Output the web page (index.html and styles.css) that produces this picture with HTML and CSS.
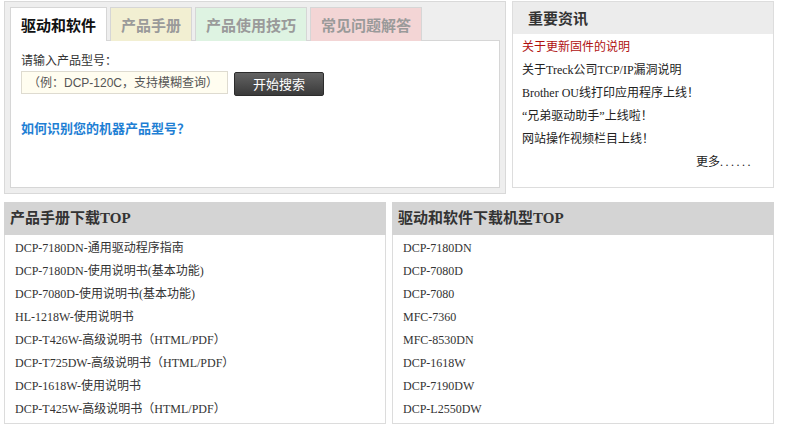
FILE: index.html
```html
<!DOCTYPE html>
<html lang="zh-CN">
<head>
<meta charset="utf-8">
<title>Brother 支持</title>
<link rel="stylesheet" href="styles.css">
</head>
<body>
<div class="page">
  <div class="top-row">
    <div class="search-box">
      <div class="tabs">
        <div class="tab tab-active">驱动和软件</div>
        <div class="tab tab-manual">产品手册</div>
        <div class="tab tab-tips">产品使用技巧</div>
        <div class="tab tab-faq">常见问题解答</div>
      </div>
      <div class="tab-content">
        <div class="label">请输入产品型号：</div>
        <div class="search-row">
          <input class="search-input" type="text" placeholder="（例：DCP-120C，支持模糊查询）">
          <button class="search-btn" type="button">开始搜索</button>
        </div>
        <a class="help-link" href="#">如何识别您的机器产品型号？</a>
      </div>
    </div>
    <div class="news-box">
      <div class="news-head">重要资讯</div>
      <ul class="news-list">
        <li class="news-hot">关于更新固件的说明</li>
        <li>关于Treck公司TCP/IP漏洞说明</li>
        <li>Brother OU线打印应用程序上线！</li>
        <li>“兄弟驱动助手”上线啦！</li>
        <li>网站操作视频栏目上线！</li>
        <li class="news-more">更多<span class="dots">......</span></li>
      </ul>
    </div>
  </div>
  <div class="bottom-row">
    <div class="panel">
      <div class="panel-head">产品手册下载TOP</div>
      <ul class="panel-list">
        <li>DCP-7180DN-通用驱动程序指南</li>
        <li>DCP-7180DN-使用说明书(基本功能)</li>
        <li>DCP-7080D-使用说明书(基本功能)</li>
        <li>HL-1218W-使用说明书</li>
        <li>DCP-T426W-高级说明书（HTML/PDF）</li>
        <li>DCP-T725DW-高级说明书（HTML/PDF）</li>
        <li>DCP-1618W-使用说明书</li>
        <li>DCP-T425W-高级说明书（HTML/PDF）</li>
      </ul>
    </div>
    <div class="panel">
      <div class="panel-head">驱动和软件下载机型TOP</div>
      <ul class="panel-list">
        <li>DCP-7180DN</li>
        <li>DCP-7080D</li>
        <li>DCP-7080</li>
        <li>MFC-7360</li>
        <li>MFC-8530DN</li>
        <li>DCP-1618W</li>
        <li>DCP-7190DW</li>
        <li>DCP-L2550DW</li>
      </ul>
    </div>
  </div>
</div>
</body>
</html>
```

FILE: styles.css
```css
* { box-sizing: border-box; }

html, body {
  margin: 0;
  padding: 0;
  background: #fff;
}

body {
  font-family: "Liberation Serif", "Noto Sans CJK SC", serif;
  font-size: 12px;
  color: #333;
}

ul { list-style: none; margin: 0; padding: 0; }

.page {
  padding: 1px 0 0 4px;
  width: 788px;
}

.top-row {
  display: flex;
  gap: 6px;
  align-items: flex-start;
}

.search-box {
  width: 502px;
  height: 193px;
  background: #eeeeee;
  border: 1px solid #d9d9d9;
  padding: 5px;
  display: flex;
  flex-direction: column;
}

.tabs {
  display: flex;
  gap: 3px;
  height: 33px;
  position: relative;
  z-index: 1;
}

.tab {
  height: 34px;
  padding: 0 10px;
  border: 1px solid #d6d6d6;
  border-bottom: none;
  font-family: "Noto Sans CJK SC", sans-serif;
  font-weight: bold;
  font-size: 15px;
  line-height: 33px;
  color: #9a9a9a;
}

.tab-active {
  background: #fff;
  color: #111;
}

.tab-manual { background: #f2efd2; }
.tab-tips { background: #def3e2; }
.tab-faq { background: #f3d5d5; }

.tab-content {
  flex: 1;
  background: #fff;
  border: 1px solid #d6d6d6;
  padding: 11px 10px 0 10px;
}

.label {
  font-family: "Noto Sans CJK SC", sans-serif;
  font-size: 12px;
  line-height: 16px;
  color: #333;
}

.search-row {
  display: flex;
  gap: 6px;
  margin-top: 3px;
  align-items: flex-start;
}

.search-input {
  width: 207px;
  height: 23px;
  margin: 0;
  padding: 0 0 0 6px;
  border: 1px solid #dedbd0;
  background: #fffdf0;
  font-family: "Liberation Sans", "Noto Sans CJK SC", sans-serif;
  font-size: 12px;
  color: #555;
  outline: none;
}

.search-input::placeholder {
  color: #555;
  opacity: 1;
}

.search-btn {
  width: 90px;
  height: 24px;
  margin: 1px 0 0 0;
  padding: 0;
  border: 1px solid #2c2c2c;
  border-radius: 2px;
  background: linear-gradient(#636363, #3a3a3a);
  color: #fff;
  font-family: "Noto Sans CJK SC", sans-serif;
  font-size: 13px;
  line-height: 22px;
}

.help-link {
  display: block;
  margin-top: 23px;
  font-family: "Noto Sans CJK SC", sans-serif;
  font-size: 13px;
  font-weight: bold;
  line-height: 18px;
  color: #1f7fd4;
  text-decoration: none;
}

.news-box {
  width: 262px;
  height: 187px;
  border: 1px solid #dddddd;
  background: #fff;
}

.news-head {
  height: 32px;
  background: #ececec;
  padding-left: 15px;
  font-family: "Noto Sans CJK SC", sans-serif;
  font-weight: bold;
  font-size: 15px;
  line-height: 32px;
  color: #333;
}

.news-list {
  padding: 2px 0 0 9px;
}

.news-list li {
  line-height: 23px;
  color: #222;
  white-space: nowrap;
}

.news-list .news-hot { color: #b01010; }

.news-list .news-more {
  text-align: right;
  padding-right: 20px;
}

.dots {
  letter-spacing: 2.5px;
}

.bottom-row {
  display: flex;
  gap: 6px;
  margin-top: 8px;
}

.panel {
  width: 382px;
  height: 222px;
  border: 1px solid #dcdcdc;
  border-top: none;
  background: #fff;
}

.panel-head {
  height: 33px;
  margin: 0 -1px;
  background: #d4d4d4;
  padding-left: 6px;
  font-family: "Liberation Serif", "Noto Sans CJK SC", serif;
  font-weight: bold;
  font-size: 15px;
  line-height: 33px;
  color: #333;
}

.panel-list {
  padding: 2px 0 0 10px;
}

.panel-list li {
  line-height: 23px;
  color: #333;
  white-space: nowrap;
}
```
